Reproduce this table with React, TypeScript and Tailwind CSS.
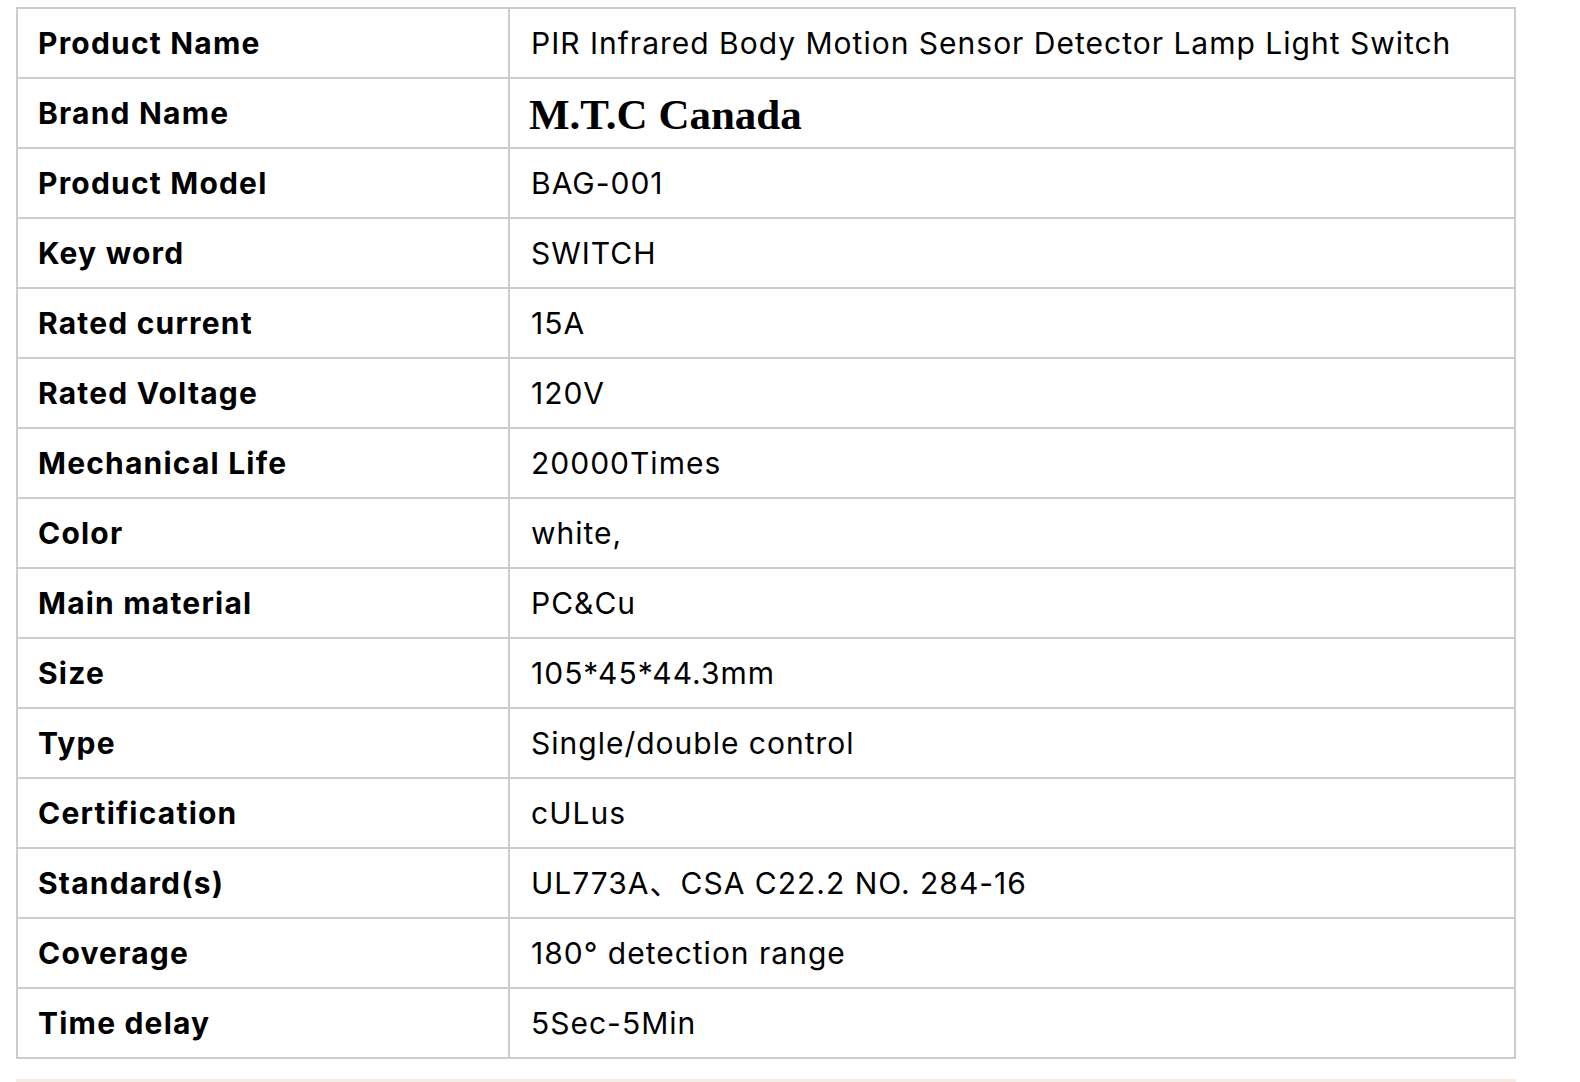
import React from "react";

const rows: [string, string][] = [
  ["Product Name", "PIR Infrared Body Motion Sensor Detector Lamp Light Switch"],
  ["Brand Name", "M.T.C Canada"],
  ["Product Model", "BAG-001"],
  ["Key word", "SWITCH"],
  ["Rated current", "15A"],
  ["Rated Voltage", "120V"],
  ["Mechanical Life", "20000Times"],
  ["Color", "white,"],
  ["Main material", "PC&Cu"],
  ["Size", "105*45*44.3mm"],
  ["Type", "Single/double control"],
  ["Certification", "cULus"],
  ["Standard(s)", "UL773A、CSA C22.2 NO. 284-16"],
  ["Coverage", "180° detection range"],
  ["Time delay", "5Sec-5Min"],
];

export default function App() {
  return (
    <div className="w-[1580px] h-[1082px] bg-white overflow-hidden pt-[7px] pl-[16px]" style={{ fontFamily: "Inter, 'Noto Sans CJK SC', sans-serif" }}>
      <table className="border-collapse w-[1500px] table-fixed">
        <colgroup>
          <col className="w-[492px]" />
          <col />
        </colgroup>
        <tbody>
          {rows.map(([k, v]) => (
            <tr key={k} className="h-[70px]">
              <td className="border-2 border-[#cccccc] pl-[20px] text-[30px] tracking-[1.2px] font-bold text-black align-middle">{k}</td>
              <td className="border-2 border-[#cccccc] pl-[21px] align-middle text-black">
                {k === "Brand Name" ? (
                  <span className="text-[43px] font-bold relative top-[2px] left-[-2px]" style={{ fontFamily: "'Liberation Serif', serif" }}>{v}</span>
                ) : (
                  <span className="text-[30px] tracking-[1px]">{v}</span>
                )}
              </td>
            </tr>
          ))}
        </tbody>
      </table>
      <div className="mt-[20px] w-[1500px] h-[4px] bg-[#f6ece2]" />
    </div>
  );
}
